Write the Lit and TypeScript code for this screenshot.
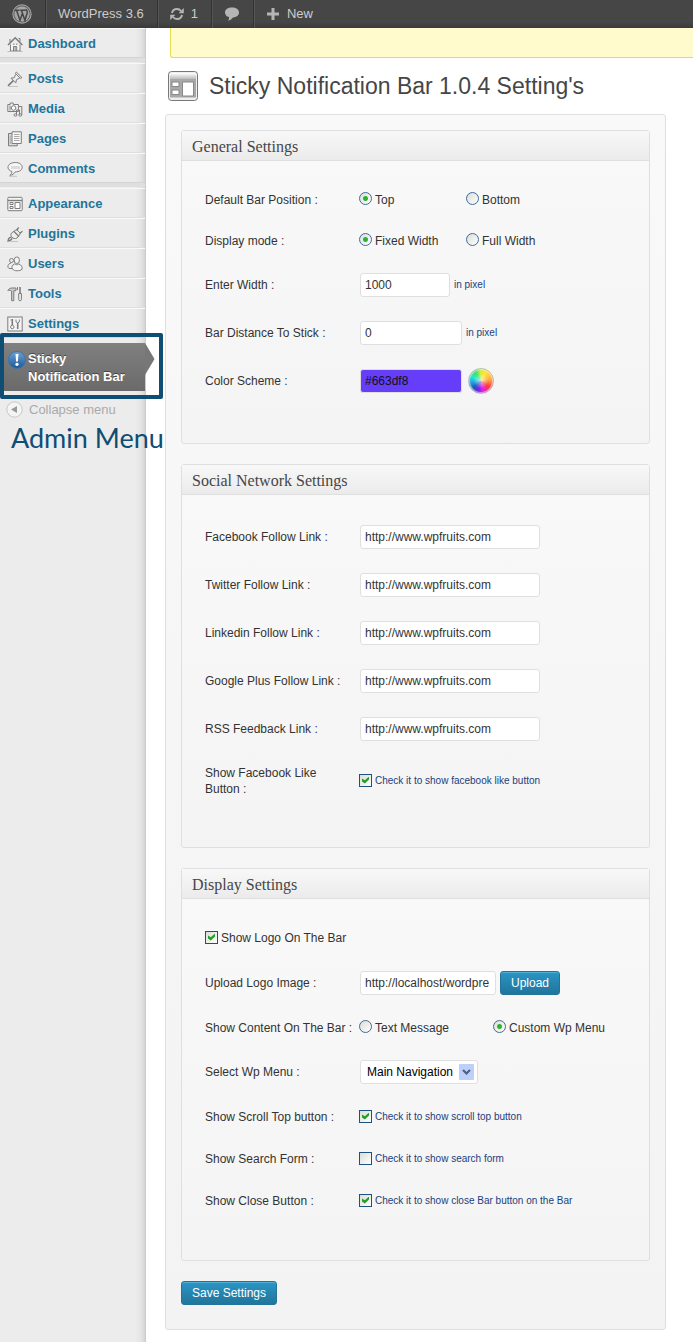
import { LitElement, html, svg, css, nothing } from "lit";
import { customElement, property } from "lit/decorators.js";

const icons: Record<string, unknown> = {
  dashboard: svg`<path d="M3.500 8.500v6.500h9.500v-6.500" fill="#f7f7f7"/><path d="M1 9 8.200 1.800 15.300 9" stroke-width="1.600"/><path d="M3 3v3M11.500 2.500h1.500v3M6.500 15v-4.500h3.200V15M6 8.200h1.500M9 8.200h1.500M8.100 10.500V15"/><path d="M.5 15.500h15" stroke="#bbb"/>`,
  posts: svg`<path d="m8.500 2.500 4.800 4.800 1.700-.6L9.300 1zM8.700 3.300 7.200 6.800 4 7.200l4.800 4.800.6-3.200 3.300-1.800" fill="#eee"/><path d="M6.300 9.700 1 14.800" stroke-width="1.600"/><path d="M2 15.500h9" stroke="#c4c4c4"/>`,
  media: svg`<path d="M.8 3.500h2.400V2h3v1.500h5.200v7H.8z" fill="#f4f4f4"/><circle cx="6.600" cy="7" r="2.300" fill="#fff"/><path d="M3 4.500v5M11.400 5.500h3.400v8.200M9.500 13.700V9h3v4.700"/><ellipse cx="8.500" cy="14" rx="1.500" ry="1.200"/><ellipse cx="13.300" cy="14" rx="1.500" ry="1.200"/>`,
  pages: svg`<path d="M5 2.500H1.500v12.300h8.700V13" fill="#ddd"/><path d="M5 .8h9.300v11.700H5z" fill="#f8f8f8"/><path d="M7 3.500h5.500M7 5.500h5.500M7 7.500h5.500M7 9.500h5.500" stroke="#aaa"/><path d="M3.200 4.500v8.500" stroke="#aaa"/>`,
  comments: svg`<path d="M8.300 1.500C4 1.500 1 3.600 1 6.300c0 2 1.700 3.500 4 4.200-.1 1.700-.9 2.900-2.200 3.900 2.500-.3 4.400-1.500 5.400-3.500 4.200 0 7-2 7-4.700 0-2.700-2.800-4.700-6.900-4.700z" fill="#f5f5f5"/><path d="M4 6.500h9" stroke="#dcdcdc" stroke-width="3"/><path d="M2 15.300h8" stroke="#c4c4c4"/>`,
  appearance: svg`<rect x=".8" y="1.300" width="14.400" height="13.400" rx="1" fill="#f6f6f6"/><path d="M1 4.500h14" stroke-width="1.400"/><path d="M3 6.500h3v2H3zM3 10.500h3v2H3zM8 6.500h5v6H8z" fill="#fff"/>`,
  plugins: svg`<path d="m4.500 7 5-3.500 4 4L10 12c-2 1-3.700.6-5-.7S3.600 8.500 4.500 7z" fill="#eee"/><path d="m9.500 4.500 2.200-3M12.500 7.500l3-2.200M7 5.500l5 5M4.500 11.500C2.500 11 1.500 12.300 1 15c2.500-.3 3.500-1 4-2.700" stroke-width="1.300"/><path d="M3 15.500h8" stroke="#c4c4c4"/>`,
  users: svg`<circle cx="4.500" cy="4.500" r="2" fill="#eee"/><path d="M5.500 12.500H2C0 11 .8 7.500 4 7.200" fill="#eee"/><rect x="7.300" y="1" width="5" height="6.500" rx="2.500" fill="#f5f5f5"/><path d="M7.500 8C5 9 4.300 11.500 5.500 13c1.500 2.300 7.500 2.300 9.500.3.800-2-.8-4.700-3.300-5.300-1.200 1-3 1-4.200 0z" fill="#f5f5f5"/>`,
  tools: svg`<path d="M.8 4.500C2 2.500 3.500 2 5 2h4v2.700H6.800v10H4.600V5C3.500 4.200 2 4.300.8 4.500z" fill="#ccc"/><path d="M13 1v6" stroke-width="1.600"/><path d="M11.700 7.500h2.700v6.200c0 1.400-2.700 1.400-2.700 0z" fill="#eee"/><path d="M10.500 1v3" />`,
  settings: svg`<rect x=".8" y="1" width="14.400" height="14" fill="#f4f4f4"/><path d="M5.300 3v6M10.700 7v6" stroke-width="1.600"/><circle cx="5.300" cy="11" r="1.700" fill="#fff"/><path d="M9 3.500v2.300l1.700 1.200 1.700-1.200V3.500M3.500 4h1"/>`,
};

const groups = [
  [["dashboard", "Dashboard"]],
  [["posts", "Posts"], ["media", "Media"], ["pages", "Pages"], ["comments", "Comments"]],
  [["appearance", "Appearance"], ["plugins", "Plugins"], ["users", "Users"], ["tools", "Tools"], ["settings", "Settings"]],
];

@customElement("admin-toolbar")
export class AdminToolbar extends LitElement {
  static styles = css`
    :host { display: block; }
    .bar {
      display: flex; height: 28px; color: #ccc; font-size: 13px;
      background: linear-gradient(#464646 22px, #3a3a3a);
    }
    .item {
      display: flex; align-items: center; gap: 7px; padding: 0 13px 0 12px; color: inherit; text-decoration: none;
      border-right: 1px solid #333; box-shadow: 1px 0 #555; line-height: 28px; white-space: nowrap;
    }
    .item:last-child { border: 0; box-shadow: none; }
    svg { display: block; }
  `;
  render() {
    return html`<nav class="bar" aria-label="Toolbar">
      <a class="item" href="#" aria-label="About WordPress">
        <svg width="20" height="20" viewBox="0 0 20 20">
          <circle cx="10" cy="10" r="9.100" fill="none" stroke="#a5a5a5" stroke-width="1.200"/>
          <circle cx="10" cy="10" r="7.800" fill="#a5a5a5"/>
          <path d="M2.800 6.300h4.800M8.200 6.300h5.500M4.600 6.500 8 16.300l2.500-7.100M9.500 6.500l3.400 9.800 2.300-7.300c.6-2-1.100-2.400-.8-4" fill="none" stroke="#464646" stroke-width="1.500"/>
        </svg>
      </a>
      <a class="item" href="#">WordPress 3.6</a>
      <a class="item" href="#">
        <svg width="14" height="14" viewBox="0 0 14 14" fill="none" stroke="#b5b5b5" stroke-width="2">
          <path d="M2 6C2.500 3.500 4.500 2 7 2c1.800 0 3 .7 4 2M12 8c-.5 2.500-2.500 4-5 4-1.800 0-3-.7-4-2"/>
          <path d="M13.800 1v5.200H8.600zM.2 13V7.800h5.200z" fill="#b5b5b5" stroke="none"/>
        </svg>1
      </a>
      <a class="item" href="#" aria-label="Comments">
        <svg width="16" height="14" viewBox="0 0 16 14">
          <path d="M8 .5c4 0 7 2 7 4.900s-2.600 4.800-6 5C8 12 6.300 13.200 4 13.500c.9-1 1.200-2.200 1-3.500C2.600 9.300 1 7.700 1 5.400 1 2.500 4 .5 8 .5z" fill="#b5b5b5"/>
        </svg>
      </a>
      <a class="item" href="#">
        <svg width="14" height="12" viewBox="0 0 14 12"><path d="M7 0v12M1 6h12" stroke="#b5b5b5" stroke-width="3"/></svg>New
      </a>
    </nav>`;
  }
}

@customElement("admin-menu")
export class AdminMenu extends LitElement {
  static styles = css`
    :host {
      display: block; flex: 0 0 146px; min-width: 0; box-sizing: border-box; border-right: 1px solid #ccc;
      background: linear-gradient(to left, #d4d4d4, #e4e4e4 4px, #ececec 10px);
    }
    .group { margin: 0 0 5px; padding: 0; list-style: none; border-bottom: 1px solid #d4d4d4; box-shadow: 0 4px #dfdfdf; }
    .group:last-of-type { box-shadow: none; }
    .link {
      display: flex; align-items: center; gap: 5px; height: 30px; padding: 1px 0 0 7px; box-sizing: border-box;
      border-top: 1px solid #f9f9f9; border-bottom: 1px solid #dedede;
      color: #21759b; font-weight: bold; font-size: 13px; text-decoration: none;
    }
    .group .row:last-child .link { border-bottom: 0; height: 29px; }
    .icon { fill: none; stroke: #7d7d7d; stroke-width: 1; flex: none; }
    .marked { position: relative; }
    .frame {
      position: absolute; top: -10px; left: 0; right: -18px; bottom: -8px;
      border: 4px solid #0f4d75; border-radius: 2px; pointer-events: none;
    }
    .current {
      position: relative; display: flex; gap: 2px; padding: 7px 0 5px 8px; height: 48px; box-sizing: border-box;
      background: linear-gradient(#808080, #6a6a6a); color: #fff; font-weight: bold; font-size: 13px; line-height: 18px;
      text-decoration: none; text-shadow: 0 -1px #444; white-space: nowrap;
    }
    .arrow { position: absolute; left: 100%; top: 0; }
    .bang { flex: none; margin-top: 1px; }
    .collapse {
      display: flex; align-items: center; gap: 6px; margin-top: 8px; padding: 0 0 0 6px; height: 20px;
      border: 0; background: none; color: #aaa; font: 13px "Liberation Sans", Arial, sans-serif; white-space: nowrap;
    }
    .caption {
      position: relative; margin: 2px 0 0 11px; color: #0f4d75; font: 27px/34px Lato, sans-serif; white-space: nowrap;
    }
  `;
  render() {
    return html`<nav aria-label="Admin menu">
        ${groups.map((g) => html`<ul class="group">
          ${g.map(([icon, name]) => html`<li class="row"><a class="link" href="#">
            <svg class="icon" width="16" height="16" viewBox="0 0 16 16">${icons[icon]}</svg>${name}
          </a></li>`)}
        </ul>`)}
        <div class="marked">
          <a class="current" href="#" aria-current="page">
            <svg class="bang" width="18" height="18" viewBox="0 0 18 18">
              <defs><linearGradient id="b" x2="0" y2="1"><stop stop-color="#6fa3d8"/><stop offset="1" stop-color="#1c5795"/></linearGradient></defs>
              <circle cx="9" cy="9" r="8.500" fill="url(#b)" stroke="#3d74ad"/>
              <path d="M7.500 3h3l-.6 7.500H8.100z" fill="#fff"/><circle cx="9" cy="13.300" r="1.600" fill="#fff"/>
            </svg>
            <span>Sticky<br>Notification Bar</span>
            <svg class="arrow" width="10" height="32" viewBox="0 0 10 32"><path d="M0 0 9.500 16 0 32z" fill="#777"/></svg>
          </a>
          <div class="frame"></div>
        </div>
        <button class="collapse" type="button">
          <svg width="17" height="17" viewBox="0 0 17 17"><circle cx="8.500" cy="8.500" r="7.700" fill="#f4f4f4" stroke="#c6c6c6"/><path d="M11 5v7L5 8.500z" fill="#999"/></svg>
          Collapse menu
        </button>
      </nav>
      <div class="caption">Admin Menu</div>`;
  }
}

@customElement("settings-box")
export class SettingsBox extends LitElement {
  @property() heading = "";
  static styles = css`
    :host { display: block; border: 1px solid #dfdfdf; border-radius: 3px; background: linear-gradient(#f9f9f9, #f4f4f4); }
    .title {
      margin: 0; padding: 0 10px; height: 30px; box-sizing: border-box; border-bottom: 1px solid #dfdfdf;
      background: linear-gradient(#f8f8f8, #ebebeb); color: #464646; font: 16px/31px "Liberation Serif", serif;
    }
    .body { padding: 18px 23px 38px; }
  `;
  render() {
    return html`<h3 class="title">${this.heading}</h3><div class="body"><slot></slot></div>`;
  }
}

@customElement("app-root")
export class AppRoot extends LitElement {
  static styles = css`
    :host { display: block; min-height: 100vh; background: #fff; color: #333; font: 12px/16px "Liberation Sans", Arial, sans-serif; }
    .layout { display: flex; align-items: stretch; min-height: calc(100vh - 28px); }
    .content { flex: 1; min-width: 0; padding: 0 0 12px 19px; }
    .notice {
      height: 30px; box-sizing: border-box; margin-left: 5px; background: #fffbcc;
      border: 1px solid #e6db55; border-width: 0 0 1px 1px; border-radius: 0 0 0 3px;
    }
    .head { display: flex; align-items: center; gap: 10px; height: 56px; padding-left: 2px; }
    .head h2 { margin: 0; font-size: 23px; line-height: 30px; font-weight: normal; color: #464646; white-space: nowrap; }
    .panel {
      display: flex; flex-direction: column; gap: 20px; align-items: stretch; margin-right: 27px; padding: 15px 15px 24px;
      border: 1px solid #dfdfdf; border-radius: 3px; background: linear-gradient(#f9f9f9, #f3f3f3);
    }
    .row { display: grid; grid-template-columns: 154px 1fr; align-items: center; min-height: 48px; }
    .row.radios { min-height: 41px; }
    .row.check { min-height: 42px; }
    .row.tall { min-height: 56px; }
    .row.single { display: flex; }
    .name { padding-right: 4px; }
    .row.tall .name { padding-right: 24px; }
    .name.tight { padding: 0; white-space: nowrap; }
    .field { display: flex; align-items: center; gap: 3px; white-space: nowrap; }
    .radios .field { gap: 0; }
    .option { display: flex; align-items: center; gap: 3px; width: 107px; }
    .option.wide { width: 134px; }
    .note { color: #21407d; font-size: 10px; }
    input, select, button { font: inherit; margin: 0; box-sizing: border-box; }
    .text {
      height: 24px; margin: 0 1px; padding: 0 4px; border: 1px solid #dfdfdf; border-radius: 3px; background: #fff; color: #333;
      outline: 0; width: 180px;
    }
    .text.w90 { width: 90px; }
    .text.w102 { width: 102px; }
    .text.w136 { width: 136px; }
    .text.swatch { background: #663df8; color: #111; }
    .wheel {
      width: 26px; height: 26px; margin-left: 2px; padding: 0; border: 1px solid #bbb; border-radius: 50%;
      box-shadow: inset 0 0 0 1px #ffffff80;
      background: radial-gradient(#ffffff99, #ffffff00 45%),
        conic-gradient(#d8f03c, #ffe23c 30deg, #ffac45 80deg, #ff3c3c 125deg, #e020e8 170deg, #7a20ee 195deg, #1b5fb5 230deg, #28a0e8 262deg, #20e8c8 295deg, #48e070 330deg, #d8f03c);
    }
    input[type="radio"], input[type="checkbox"] {
      appearance: none; flex: none; width: 13px; height: 13px; border: 1px solid #1c5180;
      background: linear-gradient(135deg, #dcdcd7, #fff);
    }
    input[type="radio"], input[type="checkbox"] { margin-bottom: 2px; }
    input[type="radio"] { border-radius: 50%; border-color: #3d6c9c; }
    input[type="radio"]:checked { background: radial-gradient(#2cb52c 2px, #2cb52c00 3px), linear-gradient(135deg, #dcdcd7, #fff); }
    input[type="checkbox"]:checked::before {
      content: ""; display: block; width: 7px; height: 7px; margin: 2px; background: #21a121;
      clip-path: polygon(0 29%, 40% 55%, 100% 0, 100% 43%, 40% 100%, 0 71%);
    }
    .primary {
      height: 24px; padding: 0 10px; border: 1px solid #21759b; border-radius: 3px; color: #fff;
      background: linear-gradient(#2a95c5, #21759b); box-shadow: inset 0 1px #78c8e680; white-space: nowrap;
    }
    .save { align-self: flex-start; }
    .pick { position: relative; margin-left: 1px; }
    .pick select {
      appearance: none; display: block; width: 118px; height: 24px; padding: 0 20px 0 6px;
      border: 1px solid #dfdfdf; border-radius: 3px; background: #fff; color: #000;
    }
    .pick svg { position: absolute; right: 4px; top: 4px; pointer-events: none; }
  `;

  private radios(name: string, label: string, a: string, b: string, second = false, wide = false) {
    return html`<div class="row radios" role="radiogroup" aria-label=${label}>
      <span class="name ${wide ? "tight" : ""}">${label}</span>
      <div class="field">
        <label class="option ${wide ? "wide" : ""}"><input type="radio" name=${name} ?checked=${!second}>${a}</label>
        <label class="option ${wide ? "wide" : ""}"><input type="radio" name=${name} ?checked=${second}>${b}</label>
      </div>
    </div>`;
  }

  private text(id: string, label: string, value: string, size = "", extra: unknown = nothing) {
    return html`<div class="row">
      <label class="name" for=${id}>${label}</label>
      <div class="field"><input class="text ${size}" id=${id} type="text" .value=${value}>${extra}</div>
    </div>`;
  }

  private check(id: string, label: string, note: string, on = true, kind = "check") {
    return html`<div class="row ${kind}">
      <label class="name" for=${id}>${label}</label>
      <div class="field"><input type="checkbox" id=${id} ?checked=${on}><label class="note" for=${id}>${note}</label></div>
    </div>`;
  }

  render() {
    const url = "http://www.wpfruits.com";
    const pixel = html`<span class="note">in pixel</span>`;
    return html`<admin-toolbar></admin-toolbar>
      <div class="layout">
        <admin-menu></admin-menu>
        <main class="content">
          <div class="notice"></div>
          <header class="head">
            <svg width="32" height="32" viewBox="0 0 32 32">
              <defs><linearGradient id="t" x2="0" y2="1"><stop stop-color="#fff"/><stop offset="1" stop-color="#bbb"/></linearGradient></defs>
              <rect x="1.500" y="1.500" width="29" height="29" rx="3" fill="#eee" stroke="#777"/>
              <path d="M3 3h26v6H3z" fill="url(#t)"/><path d="M3 9h26v18.500H3z" fill="#a8a8a8"/>
              <path d="M5 12h7v4.500H5zM5 20h7v4.500H5zM15.500 12h11v14h-11z" fill="#fff" stroke="#888"/>
            </svg>
            <h2>Sticky Notification Bar 1.0.4 Setting's</h2>
          </header>
          <form class="panel" @submit=${(e: Event) => e.preventDefault()}>
            <settings-box heading="General Settings">
              ${this.radios("position", "Default Bar Position :", "Top", "Bottom")}
              ${this.radios("mode", "Display mode :", "Fixed Width", "Full Width")}
              ${this.text("width", "Enter Width :", "1000", "w90", pixel)}
              ${this.text("distance", "Bar Distance To Stick :", "0", "w102", pixel)}
              ${this.text("color", "Color Scheme :", "#663df8", "w102 swatch", html`<button class="wheel" type="button" aria-label="Pick a color"></button>`)}
            </settings-box>
            <settings-box heading="Social Network Settings">
              ${this.text("facebook", "Facebook Follow Link :", url)}
              ${this.text("twitter", "Twitter Follow Link :", url)}
              ${this.text("linkedin", "Linkedin Follow Link :", url)}
              ${this.text("google", "Google Plus Follow Link :", url)}
              ${this.text("rss", "RSS Feedback Link :", url)}
              ${this.check("like", "Show Facebook Like Button :", "Check it to show facebook like button", true, "tall")}
            </settings-box>
            <settings-box heading="Display Settings">
              <div class="row check single">
                <label class="field"><input type="checkbox" checked>Show Logo On The Bar</label>
              </div>
              ${this.text("logo", "Upload Logo Image :", "http://localhost/wordpre", "w136", html`<button class="primary" type="button">Upload</button>`)}
              ${this.radios("content", "Show Content On The Bar :", "Text Message", "Custom Wp Menu", true, true)}
              <div class="row">
                <label class="name" for="menu">Select Wp Menu :</label>
                <div class="field"><div class="pick">
                  <select id="menu"><option>Main Navigation</option></select>
                  <svg width="15" height="16" viewBox="0 0 15 16"><rect width="15" height="16" rx="1" fill="#bdd0fb"/><path d="m4 6 3.500 3.500L11 6" fill="none" stroke="#4d6185" stroke-width="2.200"/></svg>
                </div></div>
              </div>
              ${this.check("scroll", "Show Scroll Top button :", "Check it to show scroll top button")}
              ${this.check("search", "Show Search Form :", "Check it to show search form", false)}
              ${this.check("close", "Show Close Button :", "Check it to show close Bar button on the Bar")}
            </settings-box>
            <button class="primary save" type="submit">Save Settings</button>
          </form>
        </main>
      </div>`;
  }
}
